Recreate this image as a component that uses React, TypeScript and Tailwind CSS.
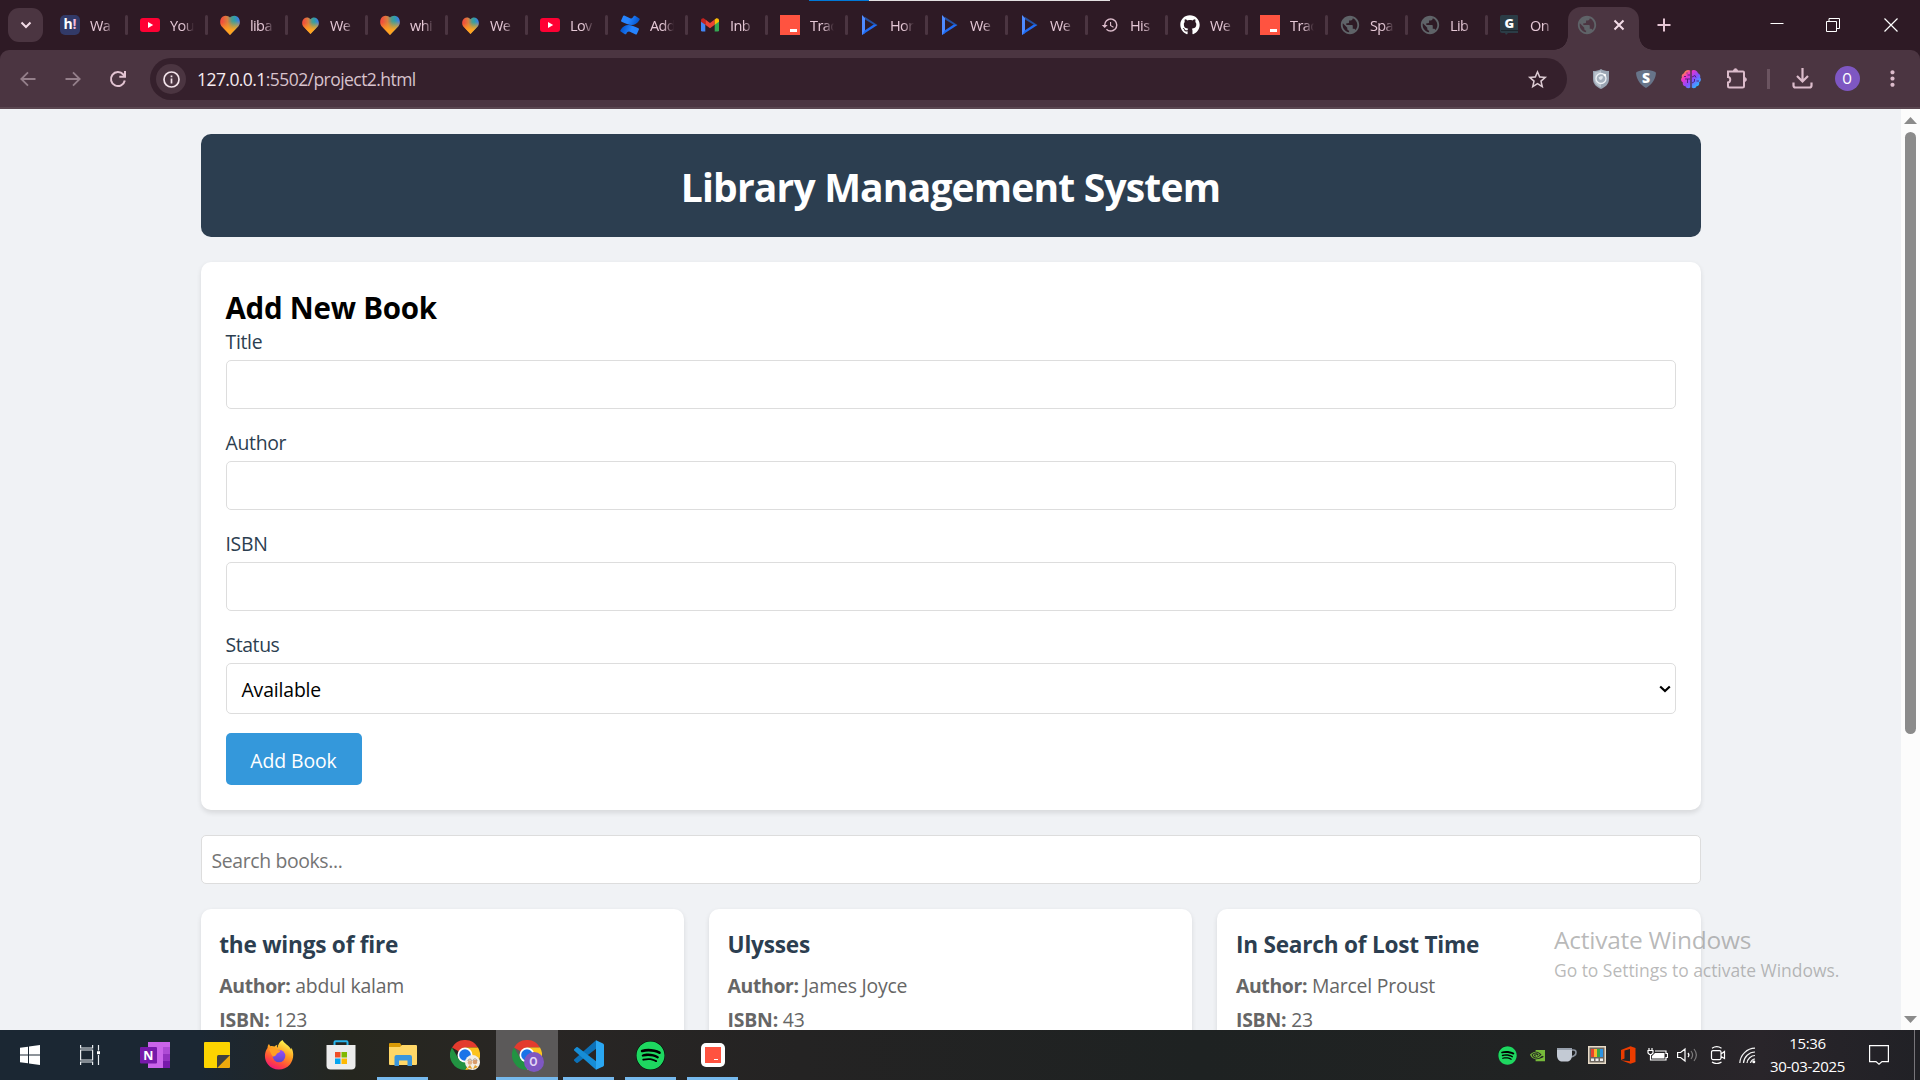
import type { ReactNode } from "react";
import { FaGithub, FaSpotify } from "react-icons/fa";
import { MdHistory, MdPublic, MdMoreVert, MdStarBorder } from "react-icons/md";
import { BsNvidia } from "react-icons/bs";

/* ---------- Tab icons ---------- */

const HeyIcon = () => (
  <span className="flex size-5 items-center justify-center rounded-[5px] bg-[#323a68] pb-0.5 font-['Open_Sans',sans-serif] text-[14px] leading-none font-bold text-white">
    h<span className="text-[#f3b8d8]">!</span>
  </span>
);

const YoutubeIcon = () => (
  <svg className="size-5" viewBox="0 0 20 20">
    <rect y="3" width="20" height="14" rx="3" fill="#ff0033" />
    <path d="M8 7v6l5.2-3z" fill="#fff" />
  </svg>
);

const HeartIcon = ({ small = false }: { small?: boolean }) => (
  <svg className={small ? "mx-px mt-px size-[17px]" : "size-5"} viewBox="0 0 20 20">
    <defs>
      <linearGradient id="heart" x1="0.05" y1="0.45" x2="0.95" y2="0.35">
        <stop offset="0.08" stopColor="#f0503c" />
        <stop offset="0.38" stopColor="#d9803f" />
        <stop offset="0.62" stopColor="#4f9a8c" />
        <stop offset="0.78" stopColor="#2f9fa8" />
        <stop offset="1" stopColor="#3f7fe0" />
      </linearGradient>
      <linearGradient id="heartBase" x1="0.4" y1="0" x2="0.5" y2="1">
        <stop offset="0.3" stopColor="#ffa01e" stopOpacity="0" />
        <stop offset="0.75" stopColor="#ffa321" />
      </linearGradient>
    </defs>
    <path d="M10 20 1.600 11.300C-.6 8.300-.2 4 2.500 1.700 5 0 8.400.6 10 2.600 11.600.6 15 0 17.500 1.700c2.700 2.300 3.100 6.600.9 9.600z" fill="url(#heart)" />
    <path d="M10 20 1.600 11.300C-.6 8.300-.2 4 2.500 1.700 5 0 8.400.6 10 2.600 11.600.6 15 0 17.500 1.700c2.700 2.300 3.100 6.600.9 9.600z" fill="url(#heartBase)" />
  </svg>
);

const ConfluenceIcon = () => (
  <svg className="size-5" viewBox="0 0 20 20">
    <defs>
      <linearGradient id="confA" x1="1" y1="0.6" x2="0" y2="0.4">
        <stop stopColor="#0052cc" />
        <stop offset="0.6" stopColor="#2684ff" />
      </linearGradient>
      <linearGradient id="confB" x1="0" y1="0.4" x2="1" y2="0.6">
        <stop stopColor="#0052cc" />
        <stop offset="0.6" stopColor="#2684ff" />
      </linearGradient>
    </defs>
    <path d="M.4 15.300c-.3.500-.1 1 .3 1.300l4.200 2.600c.5.300 1 .1 1.300-.3 1.500-2.500 2.200-3 5.300-1.500l4.200 2c.5.200 1 0 1.200-.5l2-4.500c.2-.5 0-1-.5-1.200C10.500 9.300 4.800 7.800.4 15.300z" fill="url(#confB)" />
    <path d="M19.600 4.700c.3-.5.100-1-.3-1.300L15.100.8c-.5-.3-1-.1-1.300.3-1.500 2.500-2.200 3-5.300 1.500L4.300.6C3.800.4 3.300.6 3.100 1.100l-2 4.500c-.2.500 0 1 .5 1.200 7.900 3.900 13.600 5.400 18-2.100z" fill="url(#confA)" />
  </svg>
);

const GmailIcon = () => (
  <svg className="size-5" viewBox="0 0 20 20">
    <path d="M1 6v9.200A1.300 1.300 0 0 0 2.300 16.500h3V9z" fill="#4285f4" />
    <path d="M19 6v9.200a1.300 1.300 0 0 1-1.300 1.300h-3V9z" fill="#34a853" />
    <path d="M5.300 4.500v5.300L10 13.300l4.700-3.500V4.500L10 8z" fill="#ea4335" />
    <path d="M1 5.300v1.500l4.300 3V4.500l-1-.8C2.900 2.800 1 3.700 1 5.300z" fill="#c5221f" />
    <path d="M19 5.300v1.500l-4.300 3V4.500l1-.8C17.100 2.800 19 3.700 19 5.300z" fill="#fbbc04" />
  </svg>
);

const TrackIcon = () => (
  <span className="flex size-5 items-end justify-end bg-[#ff5340] pr-[3px] pb-[3px]">
    <span className="h-[3px] w-[7px] bg-white" />
  </span>
);

const PlayIcon = () => (
  <svg className="size-5" viewBox="0 0 20 20">
    <path d="M2 0v20l3-2V3z" fill="#4f8bff" />
    <path d="m2 0 15.500 10-3.300 0L5 4.500V2z" fill="#24509f" />
    <path d="M2 20 17.500 10l-3.800-.5L5 15.300z" fill="#1f6cf5" />
  </svg>
);

const GlobeIcon = () => <MdPublic className="-mx-px size-[22px] text-[#5f6368]" />;

const GeeksIcon = () => (
  <svg className="size-5" viewBox="0 0 20 20">
    <path d="M2 0h15a1 1 0 0 1 1 1v17H8l-2 2-1-2H2a2 2 0 0 1-2-2V2a2 2 0 0 1 2-2z" fill="#2b3c46" />
    <path d="M1 15.500h17" stroke="#1c262d" />
    <text x="9.300" y="12.500" textAnchor="middle" fontFamily="Open Sans" fontSize="13" fontWeight="800" fill="#fff">G</text>
  </svg>
);

const tabs: { icon: ReactNode; label: string }[] = [
  { icon: <HeyIcon />, label: "Wa" },
  { icon: <YoutubeIcon />, label: "You" },
  { icon: <HeartIcon />, label: "liba" },
  { icon: <HeartIcon small />, label: "We" },
  { icon: <HeartIcon />, label: "whi" },
  { icon: <HeartIcon small />, label: "We" },
  { icon: <YoutubeIcon />, label: "Lov" },
  { icon: <ConfluenceIcon />, label: "Add" },
  { icon: <GmailIcon />, label: "Inb" },
  { icon: <TrackIcon />, label: "Trac" },
  { icon: <PlayIcon />, label: "Hor" },
  { icon: <PlayIcon />, label: "We" },
  { icon: <PlayIcon />, label: "We" },
  { icon: <MdHistory className="size-[18px] text-[#dcbccb]" />, label: "His" },
  { icon: <FaGithub className="size-5 text-white" />, label: "We" },
  { icon: <TrackIcon />, label: "Trac" },
  { icon: <GlobeIcon />, label: "Spa" },
  { icon: <GlobeIcon />, label: "Lib" },
  { icon: <GeeksIcon />, label: "On" },
];

/* ---------- Browser chrome ---------- */

function TabStrip() {
  return (
    <div className="relative flex h-[50px] shrink-0 items-center bg-[#2e1a25]">
      <div className="absolute top-0 left-[809px] flex h-px w-[301px]">
        <span className="w-[60px] bg-[#0078d7]" />
        <span className="flex-1 bg-[#e3e0e1]" />
      </div>
      <button className="ml-2 flex h-[34px] w-[35px] items-center justify-center rounded-[11px] bg-[#4b3541]">
        <svg className="size-3" viewBox="0 0 12 12" fill="none" stroke="#f3dce7" strokeWidth="2">
          <path d="M1.500 3.500 6 8l4.500-4.500" />
        </svg>
      </button>
      <div className="ml-[5px] flex">
        {tabs.map((tab, i) => (
          <div key={i} className="flex h-5 w-20 items-center pl-3">
            <span className="flex w-5 shrink-0 justify-center">{tab.icon}</span>
            <span className="mt-0.5 ml-2.5 w-[24px] overflow-hidden mask-r-from-55% mask-r-to-100% text-[14.500px] leading-5 tracking-[-0.600px] whitespace-nowrap text-[#e6c9d7]">
              {tab.label}
            </span>
            {i < tabs.length - 1 && <span className="ml-auto h-5 w-[3px] rounded-full bg-[#4b3541]" />}
          </div>
        ))}
      </div>
      <div className="relative mt-auto flex h-[43px] w-[71px] items-center rounded-t-[13px] bg-[#4b3541] pb-2 pl-2">
        <span className="absolute bottom-0 -left-3.5 size-3.5 bg-[radial-gradient(circle_at_top_left,transparent_13.500px,#4b3541_14px)]" />
        <span className="absolute -right-3.5 bottom-0 size-3.5 bg-[radial-gradient(circle_at_top_right,transparent_13.500px,#4b3541_14px)]" />
        <span className="flex w-[22px] justify-center"><GlobeIcon /></span>
        <svg className="ml-[15px] size-3" viewBox="0 0 12 12" stroke="#f3dce7" strokeWidth="2">
          <path d="m1.500 1.500 9 9m0-9-9 9" />
        </svg>
      </div>
      <svg className="ml-[18px] size-[14px]" viewBox="0 0 14 14" stroke="#e6c6d5" strokeWidth="2">
        <path d="M7 .5v13M.5 7h13" />
      </svg>
      <div className="ml-auto flex items-center">
        <svg className="mr-[42px] size-[14px]" viewBox="0 0 14 14"><path d="M.5 5.500h13" stroke="#fff" /></svg>
        <svg className="mr-11 size-[14px]" viewBox="0 0 14 14" fill="none" stroke="#fff">
          <path d="M.5 3.500h10v10H.5zM3 3.500v-3h10.500v10H10.500" />
        </svg>
        <svg className="mr-[22px] size-[14px]" viewBox="0 0 14 14" stroke="#fff" strokeWidth="1.200"><path d="m.5.500 13 13m0-13-13 13" /></svg>
      </div>
    </div>
  );
}

const ShieldIcon = () => (
  <svg className="h-5 w-4" viewBox="0 0 16 20">
    <path d="M8 0c2 1.500 5 2 8 2v8c0 5-3.500 8-8 10-4.500-2-8-5-8-10V2c3 0 6-.5 8-2z" fill="#9aa5b3" />
    <path d="M8 1.500v17C4 16.600 1.300 14 1.300 10V3.200C3.700 3.200 6.300 2.700 8 1.500z" fill="#b9c2cd" />
    <circle cx="8" cy="9.500" r="5" fill="#a4afbc" stroke="#eef2f6" strokeWidth="1.300" />
    <path d="M5.500 8.500 8 7l2 .5-.5 2L8 11l-1.500-.5z" fill="#dfe5eb" />
    <circle cx="11.800" cy="6" r="1.200" fill="#fff" />
  </svg>
);

const SurfIcon = () => (
  <svg className="h-[18px] w-5" viewBox="0 0 20 18">
    <path d="M10 0c3 0 6.500.7 8.800 1.700.9.4 1.200 1.100 1.100 2C19.300 9.500 15.500 15 10 18 4.500 15 .7 9.500.1 3.700 0 2.800.3 2.100 1.200 1.700 3.500.7 7 0 10 0z" fill="#677489" />
    <text x="10" y="13" textAnchor="middle" fontFamily="Open Sans" fontSize="14" fontWeight="800" fill="#fff">S</text>
  </svg>
);

const BrainIcon = () => (
  <svg className="size-5" viewBox="0 0 20 20">
    <defs>
      <linearGradient id="brain" x1="0" y1="0" x2="1" y2="1">
        <stop offset="0.100" stopColor="#ff9a2e" />
        <stop offset="0.300" stopColor="#f032c8" />
        <stop offset="0.550" stopColor="#8a4dff" />
        <stop offset="0.850" stopColor="#2fb4ff" />
      </linearGradient>
    </defs>
    <path d="M9.300 1.500v17c-1.800 1.500-4.300.8-4.800-1.200-2-.2-3.200-2-2.600-3.800C-.2 12.500-.4 9.800.9 8.500.3 6.500 1.200 4.700 3 4.200 3.500 1.500 7 0 9.300 1.500zM10.700 1.500v17c1.800 1.500 4.300.8 4.800-1.200 2-.2 3.200-2 2.600-3.800 2.100-1 2.300-3.700 1-5 .6-2-.3-3.800-2.100-4.300-.5-2.700-4-4.200-6.300-2.700z" fill="url(#brain)" />
    <path d="M9 6H6.500M9 10H4m2.500 0v4M3 7.500h2M11 8l3-1.500 1 2M11 14l2.500-1.500V10M15.500 12h2.500M6 3.500v1" stroke="#4a1d78" strokeWidth="0.900" fill="none" />
  </svg>
);

function Toolbar() {
  return (
    <div className="bg-[#2e1a25]">
      <div className="flex h-[59px] items-center rounded-t-[9px] border-b-2 border-[#5a4650] bg-[#4b3541] text-[#dcbccb]">
        <svg className="ml-5 size-4" viewBox="0 0 16 16" fill="none" stroke="#947f8a" strokeWidth="1.800">
          <path d="M15.500 8H1.500M8 1.300 1.300 8 8 14.700" />
        </svg>
        <svg className="ml-[29px] size-4" viewBox="0 0 16 16" fill="none" stroke="#947f8a" strokeWidth="1.800">
          <path d="M.5 8h14M8 1.300 14.700 8 8 14.700" />
        </svg>
        <svg className="ml-7 size-[18px]" viewBox="0 0 18 18" fill="none" stroke="#e3c4d2" strokeWidth="2">
          <path d="M15.800 10.500A7 7 0 1 1 14.300 4.500L16 6.300M16 1v5.700h-5.700" />
        </svg>
        <div className="mt-px ml-[23px] flex h-[42px] w-[1417px] items-center rounded-full bg-[#35202c] pl-[6px]">
          <span className="flex size-[30px] items-center justify-center rounded-full bg-[#4b3541]">
            <svg className="size-[17px]" viewBox="0 0 17 17" fill="none" stroke="#f3e3ea" strokeWidth="1.700">
              <circle cx="8.500" cy="8.500" r="7.500" />
              <path d="M8.500 7.500v5M8.500 4.500v1.700" />
            </svg>
          </span>
          <span className="ml-[11px] text-[17.500px] tracking-[-0.560px] text-[#d8c3cd]">
            <span className="text-[#f7ecf1]">127.0.0.1</span>:5502/project2.html
          </span>
          <MdStarBorder className="mr-[18px] ml-auto size-[23px] text-[#dccbd3]" />
        </div>
        <span className="ml-[26px]"><ShieldIcon /></span>
        <span className="ml-[27px]"><SurfIcon /></span>
        <span className="ml-[25px]"><BrainIcon /></span>
        <svg className="ml-[25px] size-[21px]" viewBox="0 0 21 21" fill="none" stroke="#dcbccb" strokeWidth="2">
          <path d="M2 3.500h15a1 1 0 0 1 1 1V18a1.500 1.500 0 0 1-1.500 1.500h-13A1.500 1.500 0 0 1 2 18v-3.500c2.700 0 3.300-5.500 0-5.500V3.500z" />
          <path d="M7.500 3C7.500 0 11.500 0 11.500 3M18.500 9.500c2.500 0 2.500 4 0 4" fill="#dcbccb" strokeWidth="1" />
        </svg>
        <span className="ml-5 h-5 w-[2.500px] bg-[#6b5460]" />
        <svg className="ml-[22px] size-[21px]" viewBox="0 0 21 21" fill="none" stroke="#dcbccb" strokeWidth="2.200">
          <path d="M10.500 0v13M5 8l5.500 5.500L16 8M1.500 14.500v3a2 2 0 0 0 2 2h14a2 2 0 0 0 2-2v-3" />
        </svg>
        <span className="ml-[22px] flex size-[25px] items-center justify-center rounded-full bg-[#7e57c2] font-[Roboto,sans-serif] text-[14px] leading-none text-white">O</span>
        <MdMoreVert className="ml-5 size-[25px]" />
      </div>
    </div>
  );
}

/* ---------- Page ---------- */

const books = [
  { title: "the wings of fire", author: "abdul kalam", isbn: "123" },
  { title: "Ulysses", author: "James Joyce", isbn: "43" },
  { title: "In Search of Lost Time", author: "Marcel Proust", isbn: "23" },
];

function Field({ label }: { label: string }) {
  return (
    <label className="mb-[21px] block">
      <span className="mb-1 block h-[27px] text-[19.400px] leading-[26px] tracking-[-0.300px] text-[#2c3e50]">{label}</span>
      <input className="block h-[49px] w-full rounded-[5px] border border-[#ddd] bg-white" />
    </label>
  );
}

function Page() {
  return (
    <div className="flex min-h-0 flex-1 bg-[#f0f2f5]">
      <main className="min-w-0 flex-1 overflow-hidden pt-[25px]">
        <div className="mx-auto w-[1500px]">
          <header className="flex h-[103px] items-center justify-center rounded-[10px] bg-[#2c3e50] pt-1 text-white">
            <h1 className="text-[39px] font-bold tracking-[-0.820px]">Library Management System</h1>
          </header>

          <section className="mt-[25px] h-[548px] rounded-[10px] bg-white p-[25px] shadow-[0_2.500px_5px_rgba(0,0,0,0.1)]">
            <h2 className="h-[42px] text-[29.500px] leading-[42px] font-bold tracking-[-0.250px] text-black">Add New Book</h2>
            <Field label="Title" />
            <Field label="Author" />
            <Field label="ISBN" />
            <span className="mb-1 block h-[27px] text-[19.400px] leading-[26px] tracking-[-0.400px] text-[#2c3e50]">Status</span>
            <div className="flex h-[51px] items-center justify-between rounded-[5px] border border-[#ddd] bg-white pr-1 pl-[15px]">
              <span className="pt-[3px] text-[19.400px] tracking-[-0.150px] text-black">Available</span>
              <svg className="size-3" viewBox="0 0 12 12" fill="none" stroke="#000" strokeWidth="2.200">
                <path d="M1.200 3.500 6 8l4.800-4.500" />
              </svg>
            </div>
            <button className="mt-[19px] flex h-[52px] w-[136px] items-center justify-center rounded-[5px] bg-[#3498db] pt-[3px] text-[19.400px] tracking-[-0.100px] text-white">
              Add Book
            </button>
          </section>

          <input
            className="mt-[25px] block h-[49px] w-full rounded-[5px] border border-[#ddd] bg-white pt-0.5 pl-2.5 text-[19.400px] tracking-[-0.360px] placeholder:text-[#757575]"
            placeholder="Search books..."
          />

          <div className="mt-[25px] grid grid-cols-3 gap-[25px]">
            {books.map((b) => (
              <article key={b.isbn} className="h-[240px] rounded-[10px] bg-white px-[18.750px] pt-[18px] text-[#666] shadow-[0_2.500px_5px_rgba(0,0,0,0.1)]">
                <h3 className="h-9 text-[22.600px] leading-9 font-bold tracking-[-0.220px] text-[#2c3e50]">{b.title}</h3>
                <p className="mt-[6px] text-[19.400px] leading-[34px] tracking-[-0.200px]">
                  <strong className="tracking-[-0.350px]">Author:</strong> {b.author}
                </p>
                <p className="text-[19.400px] leading-[34px] tracking-[-0.200px]">
                  <strong>ISBN:</strong> {b.isbn}
                </p>
              </article>
            ))}
          </div>
        </div>
      </main>
      <div className="flex w-[19px] flex-col items-center bg-[#fcfcfc]">
        <svg className="mt-2 h-[7px] w-[13px]" viewBox="0 0 13 7"><path d="M6.500 0 13 7H0z" fill="#8b8b8b" /></svg>
        <span className="mt-2 h-[602px] w-[11px] rounded-full bg-[#8b8b8b]" />
        <svg className="mt-auto mb-[7px] h-[7px] w-[13px]" viewBox="0 0 13 7"><path d="M0 0h13L6.500 7z" fill="#8b8b8b" /></svg>
      </div>
    </div>
  );
}

/* ---------- Taskbar ---------- */

const ChromeIcon = () => (
  <svg className="size-[30px]" viewBox="0 0 30 30">
    <path d="M15 15 2 7.500A15 15 0 0 1 28 7.500H15z" fill="#e33b2e" />
    <path d="M15 7.500h13A15 15 0 0 1 15 30l6.500-11.250z" fill="#fcc31e" />
    <path d="M8.500 18.750 2 7.500A15 15 0 0 0 15 30l6.500-11.250z" fill="#229342" />
    <circle cx="15" cy="15" r="7.500" fill="#fff" />
    <circle cx="15" cy="15" r="5.800" fill="#1a73e8" />
  </svg>
);

const apps: { icon: ReactNode; open?: boolean; active?: boolean }[] = [
  {
    icon: (
      <svg className="size-[30px]" viewBox="0 0 30 30">
        <path d="M8 2h22v26H8z" fill="#ca64ea" />
        <path d="M23 7h7v7h-7z" fill="#ae4bd5" />
        <path d="M23 14h7v7h-7z" fill="#9332bf" />
        <path d="M23 21h7v7h-7z" fill="#7719aa" />
        <rect y="7" width="17" height="16.500" rx="1" fill="#7719aa" />
        <text x="8.300" y="19.500" textAnchor="middle" fontFamily="Open Sans" fontSize="12.500" fontWeight="700" fill="#fff">N</text>
      </svg>
    ),
  },
  {
    icon: (
      <svg className="size-[26px]" viewBox="0 0 26 26">
        <path d="M1 0h24a1 1 0 0 1 1 1v12L13 26H1a1 1 0 0 1-1-1V1a1 1 0 0 1 1-1z" fill="#fdd400" />
        <path d="M13 26h12a1 1 0 0 0 1-1V13z" fill="#eda90d" />
        <path d="M13 26V14.500a1.500 1.500 0 0 1 1.500-1.500H26z" fill="#40403f" />
      </svg>
    ),
  },
  {
    icon: (
      <svg className="size-[30px]" viewBox="0 0 30 30">
        <defs>
          <linearGradient id="fox" x1="0.800" y1="0" x2="0.300" y2="1">
            <stop offset="0.100" stopColor="#fff04a" />
            <stop offset="0.450" stopColor="#ff9a1f" />
            <stop offset="0.750" stopColor="#ff4a3d" />
            <stop offset="1" stopColor="#f0157a" />
          </linearGradient>
          <linearGradient id="foxGlobe" x1="0.500" y1="0" x2="0.500" y2="1">
            <stop offset="0" stopColor="#9a4dff" />
            <stop offset="1" stopColor="#5a48c8" />
          </linearGradient>
        </defs>
        <path d="M18.500 0c1 3 7 5.500 8.500 9.500.5-.5.300-2 .3-2C30.500 13 29.500 20 26 24.500 20 31.500 9 31 4 24.500 0 19.500 0 13 3.500 8c0-1.500.5-3 1.500-4 .3 1 .8 1.800 1.500 2.200 1.500-.3 3 0 4 .3 1.200-1.300 2.300-1.700 3-1.800-.8 1.300-.8 2 0 3C14 4 16 1.500 18.500 0z" fill="url(#fox)" />
        <circle cx="15" cy="16" r="6.300" fill="url(#foxGlobe)" />
        <path d="M5 9c3-1.500 6-1 8.500 1 1 .3 2.200.3 3 .5-.3 2-2.500 2-3.500 3-.8 1-1.500 3-4 3-1-.5-2.500-4-4-7.500z" fill="#ffa024" />
      </svg>
    ),
  },
  {
    icon: (
      <svg className="size-[30px]" viewBox="0 0 30 30">
        <path d="M8.500 6V2.200a1 1 0 0 1 1-1h11a1 1 0 0 1 1 1V6" fill="none" stroke="#28b4ec" strokeWidth="2" />
        <path d="M.5 5h29v20.500a4 4 0 0 1-4 4h-21a4 4 0 0 1-4-4z" fill="#ececec" />
        <path d="M9 12h5.500v5.500H9z" fill="#f04e25" />
        <path d="M15.500 12H21v5.500h-5.500z" fill="#7fb900" />
        <path d="M9 18.500h5.500V24H9z" fill="#05a5ef" />
        <path d="M15.500 18.500H21V24h-5.500z" fill="#ffb901" />
      </svg>
    ),
  },
  {
    open: true,
    icon: (
      <svg className="size-[28px]" viewBox="0 0 28 28">
        <path d="M0 3a1 1 0 0 1 1-1h10l2 3v3H0z" fill="#d99a06" />
        <path d="M0 6h11l2-2h14a1 1 0 0 1 1 1v18a1 1 0 0 1-1 1H1a1 1 0 0 1-1-1z" fill="#ffd767" />
        <path d="M5.500 25V16a2 2 0 0 1 2-2h13.500a2 2 0 0 1 2 2v9h-4.500v-5.500h-8.500V25z" fill="#3a96dd" />
      </svg>
    ),
  },
  {
    icon: (
      <span className="relative">
        <ChromeIcon />
        <svg className="absolute right-0 bottom-0 size-[15px]" viewBox="0 0 15 15">
          <circle cx="7.500" cy="7.500" r="7.500" fill="#f3eee6" />
          <circle cx="5" cy="7.500" r="2.300" fill="#e0b187" />
          <circle cx="10" cy="7" r="2.300" fill="#d99b6c" />
          <path d="M3 6c0-2.500 3.500-2.500 4 0M8 5.500C8.500 3 12 3.500 12 6" fill="none" stroke="#8a7a6c" strokeWidth="0.700" />
          <path d="M2.500 12.500 5 10l2.500 4zM8 14l2-4 3 2z" fill="#e0a030" />
        </svg>
      </span>
    ),
  },
  {
    active: true,
    icon: (
      <span className="relative">
        <ChromeIcon />
        <span className="absolute -right-0.5 -bottom-0.5 flex size-[20px] items-center justify-center rounded-full bg-[#7e57c2] font-[Roboto,sans-serif] text-[12px] leading-none font-semibold text-[#e3d7f7]">O</span>
      </span>
    ),
  },
  {
    open: true,
    icon: (
      <svg className="size-[30px]" viewBox="0 0 30 30">
        <path d="M22 .3 23 8 3.800 22.800a1.200 1.200 0 0 1-1.500 0L.4 21a1.200 1.200 0 0 1 0-1.800z" fill="#0c71b8" />
        <path d="M22 29.700 23 22 3.800 7.200a1.200 1.200 0 0 0-1.500 0L.4 9a1.200 1.200 0 0 0 0 1.800z" fill="#168dd6" />
        <path d="M22 29.700V.3l7 3.200a1.800 1.800 0 0 1 1 1.600v19.800a1.800 1.800 0 0 1-1 1.600z" fill="#2aa7f2" />
      </svg>
    ),
  },
  {
    open: true,
    icon: (
      <span className="flex size-[29px] items-center justify-center rounded-full bg-black">
        <FaSpotify className="size-[29px] text-[#1ed760]" />
      </span>
    ),
  },
  {
    open: true,
    icon: (
      <span className="flex size-6 items-center justify-center rounded-[5px] bg-white">
        <span className="flex size-4 items-end justify-end bg-[#ff5340] pr-[3px] pb-[3px]">
          <span className="h-px w-1 bg-white" />
        </span>
      </span>
    ),
  },
];

const trayIcons: ReactNode[] = [
  <span className="flex size-[18px] items-center justify-center rounded-full bg-black"><FaSpotify className="size-[19px] shrink-0 text-[#1ed760]" /></span>,
  <BsNvidia className="size-[15px] text-[#76b93a]" />,
  <svg className="h-[14px] w-5" viewBox="0 0 20 14">
    <path d="M14 2h2.500a2.500 2.500 0 0 1 2.500 2.500C19 7 17 8.500 13 9" fill="none" stroke="#8c949f" strokeWidth="1.600" />
    <path d="M0 0h15v7c0 4-2 6.500-5 6.500H5c-3 0-5-2.500-5-6.500z" fill="#c3cad4" />
    <path d="M0 0h15v2H0z" fill="#98a1ad" />
  </svg>,
  <svg className="size-[18px]" viewBox="0 0 18 18">
    <path d="M0 0h18v18H0z" fill="#e8dcc8" />
    <path d="M1.500 1.500h15v15h-15z" fill="#6d675f" />
    <path d="M3 3h3v8H3z" fill="#e8442c" />
    <path d="M6 3h3v8H6z" fill="#fbb52b" />
    <path d="M9 3h3v8H9z" fill="#37a844" />
    <path d="M12 3h3v8h-3z" fill="#2b93e4" />
    <path d="M3 12.500h3V15H3zM7.500 12.500h3V15h-3zM12 12.500h3V15h-3z" fill="#eee" />
  </svg>,
  <svg className="size-[18px]" viewBox="0 0 18 18">
    <path d="M2 4 11.500.3 16.500 2v14l-5 1.700L2 14.200l9 1V3L5.500 4.500v8L2 14z" fill="#eb3c00" />
  </svg>,
  <svg className="h-[14px] w-[21px]" viewBox="0 0 21 14" fill="none" stroke="#fff" strokeWidth="1.200">
    <path d="M2 0v2.500M5 0v2.500M1 2.500h5V5L4.500 6.500h-2L1 5zM3.500 6.500V12H6M8 3h11v2.500h1.500v4H19V12H6" />
    <path d="M8 5h9.500v5.500H5V8z" fill="#fff" stroke="none" />
  </svg>,
  <svg className="h-4 w-[21px]" viewBox="0 0 21 16" fill="none" stroke="#fff" strokeWidth="1.200">
    <path d="M.6 5.500h3L8 2v12l-4.400-3.500h-3zM11 6c1 1.200 1 3 0 4" />
    <path d="M14 4c2 2.500 2 5.500 0 8M17 2c3 3.800 3 8.200 0 12" stroke="#7d7b7c" />
  </svg>,
  <svg className="h-[18px] w-4" viewBox="0 0 16 18" fill="none" stroke="#fff" strokeWidth="1.200">
    <path d="M3 4.600h6.500a1.500 1.500 0 0 1 1.500 1.500v6a1.500 1.500 0 0 1-1.500 1.500H3a1.500 1.500 0 0 1-1.500-1.500v-6A1.500 1.500 0 0 1 3 4.600zM11 8l3.500-2.500v7L11 10.500M2 2.200c3-2 6.500-2 9.500 0M2 16c3 2 6.500 2 9.500 0" />
  </svg>,
  <svg className="size-[17px]" viewBox="0 0 17 17" fill="none" stroke="#f4f4f4" strokeWidth="1.200">
    <path d="M.8 16C1.200 8 8 1.200 16 1.200M4.500 16c.4-6 5.500-11 11.500-11M8 16c.4-4 4-7.500 8-7.500M11.500 16c.3-2 2.500-4 4.500-4" />
    <circle cx="14.800" cy="14.800" r="1.500" fill="#fff" stroke="none" />
  </svg>,
];

function Taskbar() {
  return (
    <div className="flex h-[50px] shrink-0 items-center bg-[linear-gradient(90deg,#1b2733_0,#1b2733_200px,#25261f_350px,#292624_520px,#242323_800px,#1e2222_1200px,#212323_1550px,#29252a_1760px,#212126_1920px)]">
      <div className="flex w-[60px] justify-center">
        <svg className="size-5" viewBox="0 0 20 20" fill="#fff">
          <path d="M0 2.800 8 1.700v7.800H0zM9 1.500 20 0v9.500H9zM0 10.500h8v7.800L0 17.200zM9 10.500h11V20L9 18.500z" />
        </svg>
      </div>
      <div className="flex w-[63.500px] justify-center pr-1">
        <svg className="size-5" viewBox="0 0 20 20" fill="none" stroke="#e8ecef" strokeWidth="1.200">
          <path d="M.6 5h12v10H.6zM.6 0v3h12V0M.6 20v-3h12v3M18.500 0v5.500M18.500 10v10" />
          <path d="M17 6.200h3v3h-3z" fill="#fff" stroke="none" />
        </svg>
      </div>
      {apps.map((a, i) => (
        <div key={i} className={a.active ? "flex h-full w-[62px] flex-col items-center bg-[#5b5959]" : "flex h-full w-[62px] flex-col items-center"}>
          <span className="flex h-[47px] items-center pt-[3px]">{a.icon}</span>
          {a.active && <span className="h-[3px] w-full bg-[#76b9ed]" />}
          {a.open && <span className="h-[3px] w-[51px] bg-[#76b9ed]" />}
        </div>
      ))}
      <div className="ml-auto flex items-center">
        {trayIcons.map((icon, i) => (
          <span key={i} className="flex w-[30.100px] justify-center">{icon}</span>
        ))}
        <div className="ml-[5px] flex w-[79px] flex-col items-center text-[15px] leading-[23px] tracking-[-0.320px] whitespace-nowrap text-white">
          <span>15:36</span>
          <span>30-03-2025</span>
        </div>
        <svg className="ml-[22px] h-5 w-5" viewBox="0 0 20 20" fill="none" stroke="#fff" strokeWidth="1.200">
          <path d="M.6.6h18.800v16H13L10 19.200 7 16.600H.6z" />
        </svg>
        <span className="mr-[5px] ml-[25px] h-[50px] w-px bg-[#77757a]" />
      </div>
    </div>
  );
}

export default function App() {
  return (
    <div className="relative flex h-[1080px] w-[1920px] flex-col overflow-hidden font-['Open_Sans',sans-serif]">
      <TabStrip />
      <Toolbar />
      <Page />
      <Taskbar />
      <div className="pointer-events-none absolute top-[923px] left-[1554px] whitespace-nowrap text-[#8a8a8a]/60">
        <p className="text-[24.500px] leading-[34px] tracking-[-0.250px]">Activate Windows</p>
        <p className="text-[17.500px] leading-[26px] tracking-[-0.040px]">Go to Settings to activate Windows.</p>
      </div>
    </div>
  );
}
